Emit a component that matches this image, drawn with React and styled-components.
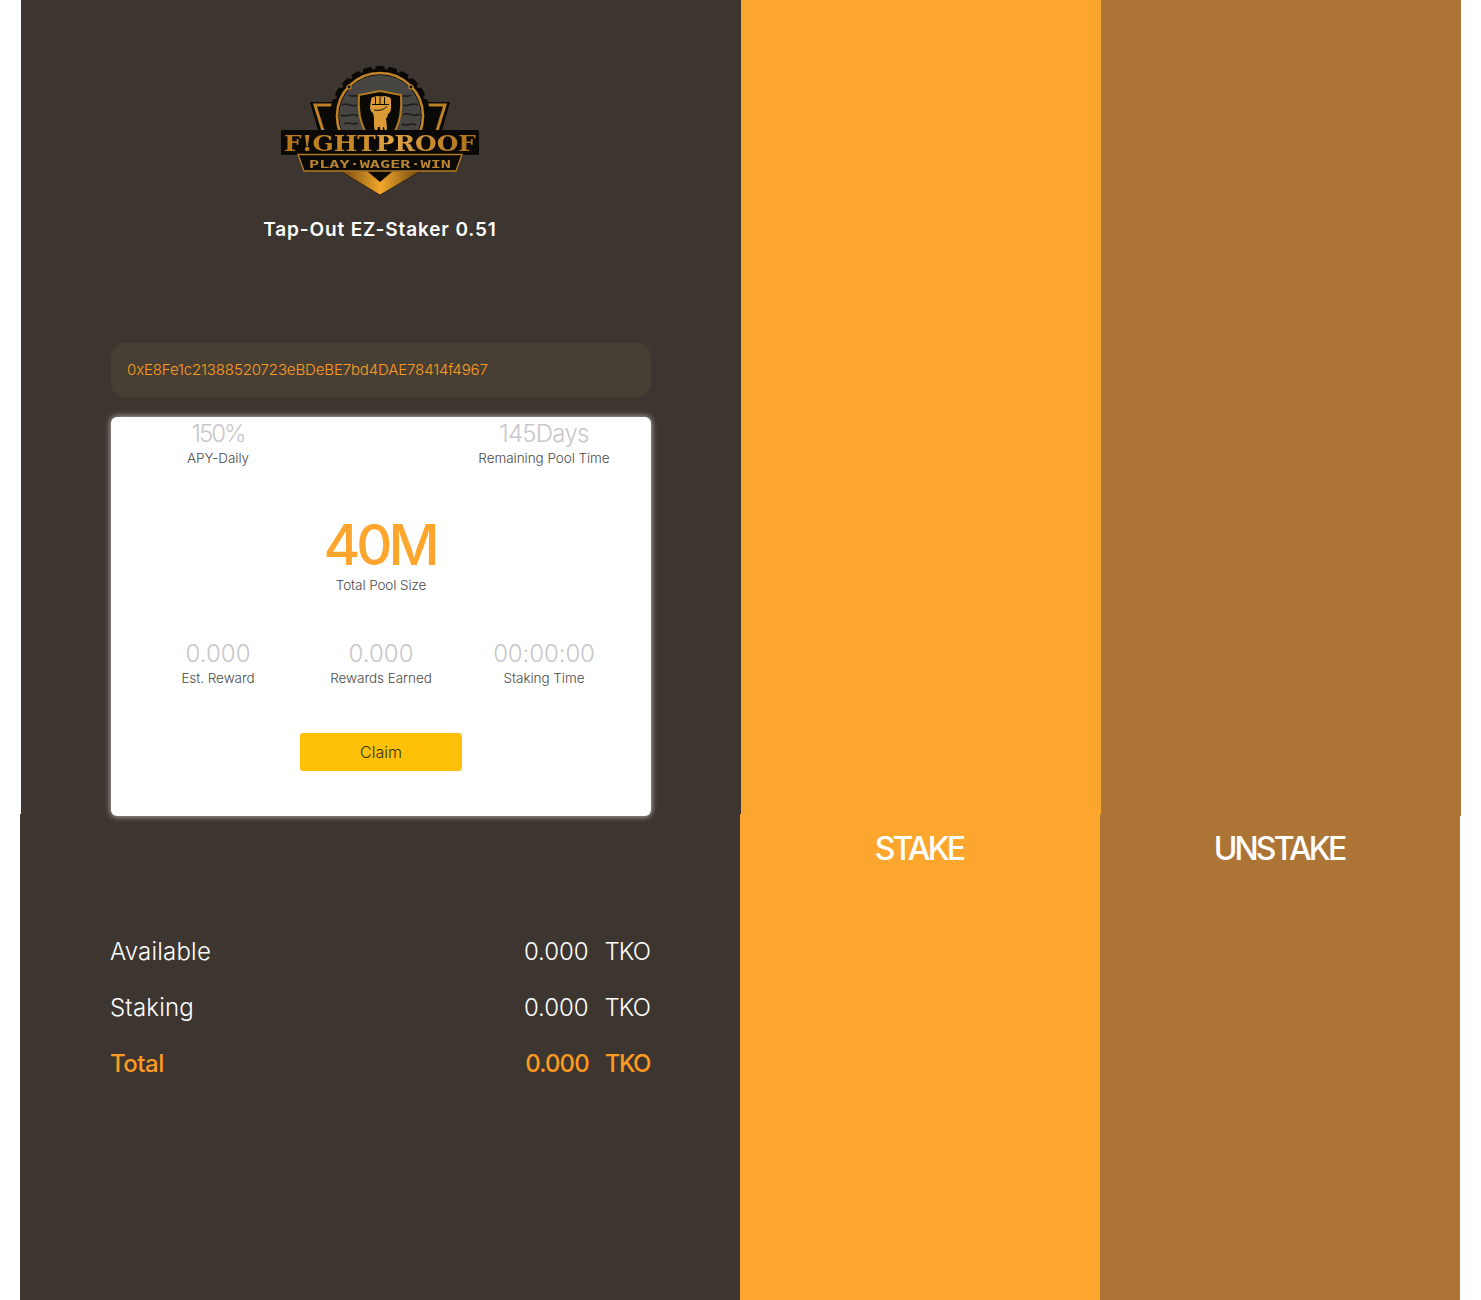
import React from "react";
import styled, { createGlobalStyle } from "styled-components";

const Global = createGlobalStyle`
  html, body { margin: 0; padding: 0; background: #fff; }
  body { font-family: "Inter", "Lato", sans-serif; }
`;

const Page = styled.div`
  width: 1481px;
  height: 1300px;
  overflow: hidden;
`;

const Row = styled.div`
  display: grid;
  grid-template-columns: 720px 360px 360px;
  height: ${(p) => p.$height}px;
  margin-left: ${(p) => p.$inset}px;
`;

const InfoPanel = styled.section`
  background: #3d3530;
  display: flex;
  flex-direction: column;
  padding: ${(p) => p.$top}px 90px 0;
`;

const ActionPanel = styled.div`
  background: ${(p) => p.$bg};
`;

const ActionHead = styled.button`
  display: block;
  width: 100%;
  height: 70px;
  padding: 0 2px 0 0;
  border: 0;
  background: ${(p) => p.$bg};
  color: #fff;
  font: 500 32px/70px "Inter", sans-serif;
  letter-spacing: -2.85px;
  text-align: center;
`;

const Brand = styled.header`
  display: flex;
  flex-direction: column;
  align-items: center;
  height: 281px;
`;

const LogoSvg = styled.svg`
  display: block;
  width: 200px;
  height: 134px;
  filter: blur(0.35px);
`;

const Title = styled.h1`
  margin: 21px 2px 0 0;
  font: 600 19px/26px "Inter", sans-serif;
  letter-spacing: 0.87px;
  color: #fff;
  white-space: nowrap;
`;

const Address = styled.div`
  height: 54px;
  border-radius: 14px;
  background: #483f34;
  color: #fd9a20;
  font: 300 15px/54px "Inter", sans-serif;
  letter-spacing: -0.13px;
  padding-left: 16px;
  margin-bottom: 20px;
`;

const Card = styled.div`
  position: relative;
  z-index: 1;
  height: 399px;
  background: #fff;
  border-radius: 6px;
  box-shadow: 0 0 6px rgba(255, 255, 255, 0.75);
  display: flex;
  flex-direction: column;
  align-items: center;
`;

const StatGrid = styled.div`
  display: grid;
  grid-template-columns: repeat(3, 163px);
  justify-content: center;
  margin-top: ${(p) => p.$top}px;
`;

const Stat = styled.div`
  grid-column: ${(p) => p.$col};
  text-align: center;
`;

const StatValue = styled.div`
  font: 300 24px/32px "Inter", sans-serif;
  letter-spacing: ${(p) => p.$track}px;
  color: #c8c6ca;
`;

const StatLabel = styled.div`
  margin-top: -1px;
  font: 300 13.5px/18px "Inter", sans-serif;
  letter-spacing: -0.05px;
  color: #4a4a4a;
`;

const Pool = styled.div`
  margin-top: 46px;
  text-align: center;
`;

const PoolValue = styled.div`
  margin-left: -3px;
  font: 500 56px/64px "Inter", sans-serif;
  letter-spacing: -4px;
  color: #fda52d;
`;

const PoolLabel = styled(StatLabel)`
  letter-spacing: -0.1px;
`;

const Claim = styled.button`
  width: 162px;
  height: 38px;
  margin-top: 46px;
  padding: 0;
  border: 0;
  border-radius: 3px;
  background: #ffc107;
  color: #2f2f12;
  font: 300 16px/38px "Inter", sans-serif;
`;

const BalanceRow = styled.div`
  display: flex;
  justify-content: space-between;
  align-items: center;
  height: 56px;
  font: ${(p) => (p.$accent ? 500 : 300)} 24px/56px "Inter", sans-serif;
  letter-spacing: ${(p) => (p.$accent ? "-0.5px" : "0.2px")};
  color: ${(p) => (p.$accent ? "#fd9a20" : "#fff")};
`;

const Amount = styled.div`
  display: flex;
  gap: 16px;
`;

const Figure = styled.span`
  letter-spacing: ${(p) => (p.$accent ? "-0.9px" : "-0.05px")};
`;

const Unit = styled.span`
  letter-spacing: ${(p) => (p.$accent ? "-1.5px" : "-0.9px")};
`;

const Logo = () => (
  <LogoSvg viewBox="282 62 200 134" aria-label="Fightproof logo">
    <defs>
      <linearGradient id="gold" x1="0" x2="1" y1="0" y2="0">
        <stop offset="0" stopColor="#b8761a" />
        <stop offset="0.4" stopColor="#c98a28" />
        <stop offset="0.55" stopColor="#e2a645" />
        <stop offset="1" stopColor="#a96c1b" />
      </linearGradient>
      <linearGradient id="tip" x1="0" x2="1" y1="0" y2="0">
        <stop offset="0" stopColor="#6d4410" />
        <stop offset="0.5" stopColor="#f2a92b" />
        <stop offset="1" stopColor="#6d4410" />
      </linearGradient>
    </defs>
    {/* wings */}
    <path d="M311 102H338L352 155H326Z" fill="#0a0906" />
    <path d="M451 102H424L410 155H436Z" fill="#0a0906" />
    <path d="M335 105H316L325 134" fill="none" stroke="#bd8128" strokeWidth="3" />
    <path d="M427 105H446L437 134" fill="none" stroke="#bd8128" strokeWidth="3" />
    {/* gear */}
    <g fill="#0a0906">
      <circle cx="381" cy="116" r="47" />
      {Array.from({ length: 17 }).map((_, i) => (
        <rect key={i} x="376" y="66" width="10" height="12" rx="3" transform={`rotate(${-120 + i * 15} 381 116)`} />
      ))}
    </g>
    {/* brain texture */}
    <circle cx="381" cy="116" r="41" fill="#474541" />
    <g fill="none" stroke="#1c1c1c" strokeWidth="1.5">
      <path d="M343 105c6-4 8 3 15 0M342 115c6 3 10-3 17 1M345 124c4-3 8 2 14-1M404 105c5 3 9-4 15 0M404 115c5-4 10 3 17-1M403 124c5 3 8-2 14 1M350 95c3 3 6-1 10 2M402 97c3-3 6 1 10-2" />
    </g>
    <circle cx="381" cy="116" r="43" fill="none" stroke="#c0822a" strokeWidth="2.6" />
    <circle cx="350" cy="87" r="2" fill="#0a0906" stroke="#c0822a" strokeWidth="1.2" />
    <circle cx="412" cy="87" r="2" fill="#0a0906" stroke="#c0822a" strokeWidth="1.2" />
    {/* shield */}
    <path d="M381 91l21 4c1 14-1 27-6 36h-30c-5-9-7-22-6-36Z" fill="#0a0906" stroke="#b47a22" strokeWidth="2" />
    {/* fist */}
    <g fill="#dc9a34">
      <path d="M372 100q0-3 3-3l3-1 4 .5 4-.5 3 1q3 0 3 3v8q0 4-3 6l-1 4h-13l-1-5q-3-2-3-6Z" />
      <path d="M375 118h12l1 10-1 4h-1l-1-5h-1l-.5 7h-2l-.5-7h-2l-1 5h-2l-1-6Z" />
    </g>
    <g stroke="#0a0906" strokeWidth="1" fill="none">
      <path d="M376.500 97v7M381 97v7M385.500 97v7M373 104.500h17M375 110c5 1 10 0 13-4" />
    </g>
    {/* main banner */}
    <rect x="282" y="130" width="198" height="25" rx="1.5" fill="#0a0906" />
    <text x="381" y="151" textAnchor="middle" textLength="192" lengthAdjust="spacingAndGlyphs" fontFamily="'DejaVu Serif', serif" fontWeight="700" fontSize="23" fill="url(#gold)">
      F!GHTPROOF
    </text>
    {/* chevron */}
    <path d="M341 171H422L381 195Z" fill="url(#tip)" stroke="#0a0906" strokeWidth="0.6" />
    <path d="M368 171H394L381 182Z" fill="#0a0906" />
    {/* sub banner */}
    <path d="M299 154.500H463L457 171H305Z" fill="#0a0906" stroke="#b47a22" strokeWidth="1.4" />
    <text x="381" y="167.500" textAnchor="middle" textLength="142" lengthAdjust="spacingAndGlyphs" fontFamily="'DejaVu Sans Mono', monospace" fontWeight="700" fontSize="11" fill="#b98531">
      PLAY·WAGER·WIN
    </text>
  </LogoSvg>
);

const StatBlock = ({ col, value, label, track = 0.05 }) => (
  <Stat $col={col}>
    <StatValue $track={track}>{value}</StatValue>
    <StatLabel>{label}</StatLabel>
  </Stat>
);

const Balance = ({ label, accent }) => (
  <BalanceRow $accent={accent}>
    <span>{label}</span>
    <Amount>
      <Figure $accent={accent}>0.000</Figure>
      <Unit $accent={accent}>TKO</Unit>
    </Amount>
  </BalanceRow>
);

export default function App() {
  return (
    <Page>
      <Global />
      <Row $height={814} $inset={21}>
        <InfoPanel $top={62}>
          <Brand>
            <Logo />
            <Title>Tap-Out EZ-Staker 0.51</Title>
          </Brand>
          <Address>0xE8Fe1c21388520723eBDeBE7bd4DAE78414f4967</Address>
          <Card>
            <StatGrid $top={1}>
              <StatBlock col={1} value="150%" label="APY-Daily" track={-2} />
              <StatBlock col={3} value="145Days" label="Remaining Pool Time" track={-0.75} />
            </StatGrid>
            <Pool>
              <PoolValue>40M</PoolValue>
              <PoolLabel>Total Pool Size</PoolLabel>
            </Pool>
            <StatGrid $top={44}>
              <StatBlock col={1} value="0.000" label="Est. Reward" />
              <StatBlock col={2} value="0.000" label="Rewards Earned" />
              <StatBlock col={3} value="00:00:00" label="Staking Time" track={-0.1} />
            </StatGrid>
            <Claim>Claim</Claim>
          </Card>
        </InfoPanel>
        <ActionPanel $bg="#fca62d" />
        <ActionPanel $bg="#ac7435" />
      </Row>
      <Row $height={486} $inset={20}>
        <InfoPanel $top={110}>
          <Balance label="Available" />
          <Balance label="Staking" />
          <Balance label="Total" accent />
        </InfoPanel>
        <ActionPanel $bg="#fca62d">
          <ActionHead $bg="#fca62d">STAKE</ActionHead>
        </ActionPanel>
        <ActionPanel $bg="#ac7435">
          <ActionHead $bg="#ac7435">UNSTAKE</ActionHead>
        </ActionPanel>
      </Row>
    </Page>
  );
}
